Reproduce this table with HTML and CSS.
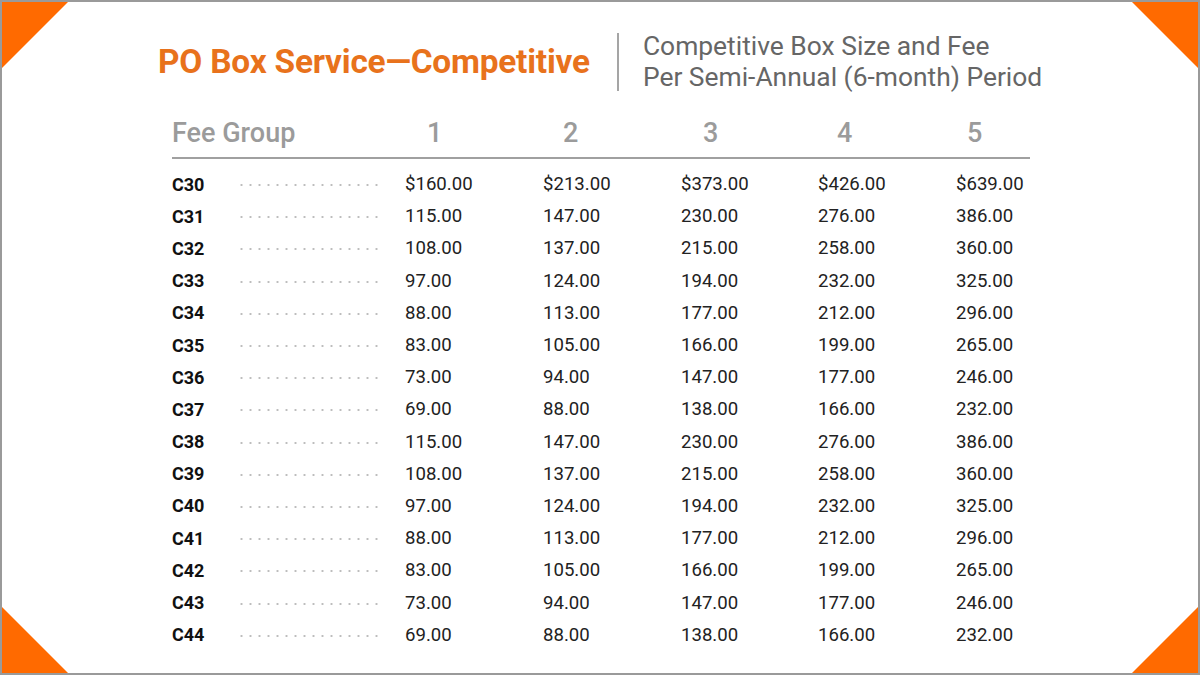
FILE: index.html
```html
<!DOCTYPE html>
<html lang="en">
<head>
<meta charset="utf-8">
<title>PO Box Service—Competitive</title>
<link rel="stylesheet" href="styles.css">
</head>
<body>
<div class="slide">
  <div class="corner corner-tl"></div>
  <div class="corner corner-tr"></div>
  <div class="corner corner-bl"></div>
  <div class="corner corner-br"></div>

  <header class="head">
    <h1 class="title">PO Box Service—Competitive</h1>
    <div class="sep"></div>
    <p class="subtitle">Competitive Box Size and Fee<br>Per Semi-Annual (6-month) Period</p>
  </header>

  <div class="table">
    <div class="thead">
      <div class="th th-group">Fee Group</div>
      <div class="th th-1">1</div>
      <div class="th th-2">2</div>
      <div class="th th-3">3</div>
      <div class="th th-4">4</div>
      <div class="th th-5">5</div>
    </div>
    <div class="tbody">
      <div class="row"><span class="lab">C30</span><span class="dots"></span><span>$160.00</span><span>$213.00</span><span>$373.00</span><span>$426.00</span><span>$639.00</span></div>
      <div class="row"><span class="lab">C31</span><span class="dots"></span><span>115.00</span><span>147.00</span><span>230.00</span><span>276.00</span><span>386.00</span></div>
      <div class="row"><span class="lab">C32</span><span class="dots"></span><span>108.00</span><span>137.00</span><span>215.00</span><span>258.00</span><span>360.00</span></div>
      <div class="row"><span class="lab">C33</span><span class="dots"></span><span>97.00</span><span>124.00</span><span>194.00</span><span>232.00</span><span>325.00</span></div>
      <div class="row"><span class="lab">C34</span><span class="dots"></span><span>88.00</span><span>113.00</span><span>177.00</span><span>212.00</span><span>296.00</span></div>
      <div class="row"><span class="lab">C35</span><span class="dots"></span><span>83.00</span><span>105.00</span><span>166.00</span><span>199.00</span><span>265.00</span></div>
      <div class="row"><span class="lab">C36</span><span class="dots"></span><span>73.00</span><span>94.00</span><span>147.00</span><span>177.00</span><span>246.00</span></div>
      <div class="row"><span class="lab">C37</span><span class="dots"></span><span>69.00</span><span>88.00</span><span>138.00</span><span>166.00</span><span>232.00</span></div>
      <div class="row"><span class="lab">C38</span><span class="dots"></span><span>115.00</span><span>147.00</span><span>230.00</span><span>276.00</span><span>386.00</span></div>
      <div class="row"><span class="lab">C39</span><span class="dots"></span><span>108.00</span><span>137.00</span><span>215.00</span><span>258.00</span><span>360.00</span></div>
      <div class="row"><span class="lab">C40</span><span class="dots"></span><span>97.00</span><span>124.00</span><span>194.00</span><span>232.00</span><span>325.00</span></div>
      <div class="row"><span class="lab">C41</span><span class="dots"></span><span>88.00</span><span>113.00</span><span>177.00</span><span>212.00</span><span>296.00</span></div>
      <div class="row"><span class="lab">C42</span><span class="dots"></span><span>83.00</span><span>105.00</span><span>166.00</span><span>199.00</span><span>265.00</span></div>
      <div class="row"><span class="lab">C43</span><span class="dots"></span><span>73.00</span><span>94.00</span><span>147.00</span><span>177.00</span><span>246.00</span></div>
      <div class="row"><span class="lab">C44</span><span class="dots"></span><span>69.00</span><span>88.00</span><span>138.00</span><span>166.00</span><span>232.00</span></div>
    </div>
  </div>
</div>
</body>
</html>
```

FILE: styles.css
```css
* { box-sizing: border-box; }
html, body { margin: 0; padding: 0; background: #fff; }
body { font-family: Roboto, "Liberation Sans", sans-serif; }

.slide {
  position: relative;
  width: 1200px;
  height: 675px;
  border: 2px solid #9a9a9a;
  background: #fff;
  overflow: hidden;
  padding: 28px 0 0 156px;
}

.corner {
  position: absolute;
  width: 70px;
  height: 70px;
  background: #ff6a00;
}
.corner-tl { top: 0; left: 0; clip-path: polygon(0 0, 100% 0, 0 100%); margin: -2px 0 0 -2px; }
.corner-tr { top: 0; right: 0; clip-path: polygon(0 0, 100% 0, 100% 100%); margin: -2px -2px 0 0; }
.corner-bl { bottom: 0; left: 0; clip-path: polygon(0 0, 100% 100%, 0 100%); margin: 0 0 -2px -2px; }
.corner-br { bottom: 0; right: 0; clip-path: polygon(100% 0, 100% 100%, 0 100%); margin: 0 -2px -2px 0; }

.head {
  display: flex;
  align-items: center;
  height: 62px;
}
.title {
  margin: 0;
  font-size: 33.4px;
  font-weight: 700;
  color: #e8721c;
  letter-spacing: -0.2px;
}
.sep {
  width: 2px;
  height: 58px;
  background: #a5a5a5;
  margin: 1px 24px 0 27px;
}
.subtitle {
  margin: 1px 0 0;
  font-size: 26.4px;
  line-height: 31px;
  color: #666;
}

.table {
  width: 858px;
  margin: 21px 0 0 14px;
}
.thead, .row {
  display: grid;
  grid-template-columns: 65px 168px 138px 138px 137px 138px 74px;
  align-items: center;
}
.thead {
  height: 46px;
  padding-bottom: 4px;
  border-bottom: 2px solid #a0a0a0;
  color: #9b9b9b;
  font-size: 27px;
  font-weight: 500;
}
.th-group { grid-column: span 2; }
.th-1 { padding-left: 22px; }
.th-2 { padding-left: 20px; }
.th-3 { padding-left: 22px; }
.th-4 { padding-left: 19px; }
.th-5 { padding-left: 11px; }

.tbody { padding-top: 9px; }
.row {
  height: 32.2px;
  font-size: 18.6px;
  color: #222;
}
.lab { font-weight: 700; color: #111; font-size: 18px; }
.dots {
  height: 4px;
  margin-right: 25px;
  margin-top: 2px;
  background-image: radial-gradient(circle, #bdbdbd 0.9px, transparent 1.3px);
  background-size: 9px 4px;
  background-repeat: repeat-x;
}
```
